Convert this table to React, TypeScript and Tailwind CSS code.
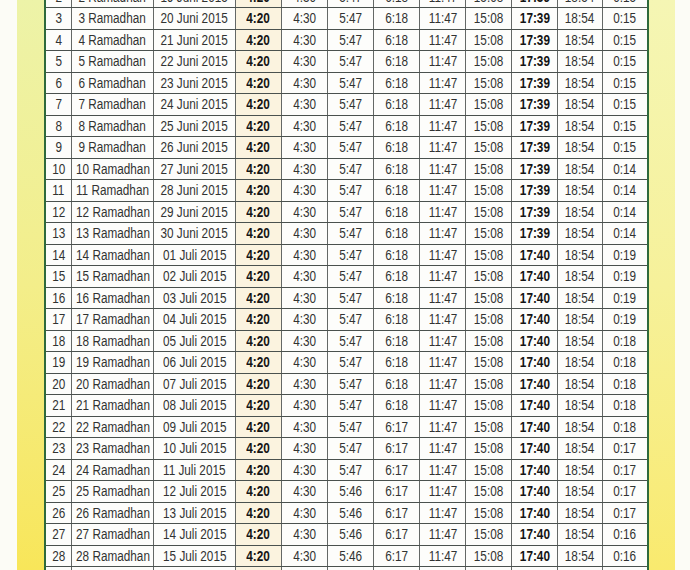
import React from "react";

type Row = {
  no: number;
  date: string;
  imsak: string;
  subuh: string;
  terbit: string;
  dhuha: string;
  dzuhur: string;
  ashar: string;
  maghrib: string;
  isya: string;
  tengah: string;
};

const pad = (n: number) => (n < 10 ? `0${n}` : `${n}`);

function buildRows(): Row[] {
  const rows: Row[] = [];
  for (let no = 2; no <= 29; no++) {
    const day = no + 17;
    const date = day <= 30 ? `${day} Juni 2015` : `${pad(day - 30)} Juli 2015`;
    let tengah = "0:15";
    if (no >= 10) tengah = "0:14";
    if (no >= 14) tengah = "0:19";
    if (no >= 18) tengah = "0:18";
    if (no >= 23) tengah = "0:17";
    if (no >= 27) tengah = "0:16";
    rows.push({
      no,
      date,
      imsak: "4:20",
      subuh: "4:30",
      terbit: no >= 25 ? "5:46" : "5:47",
      dhuha: no >= 22 ? "6:17" : "6:18",
      dzuhur: "11:47",
      ashar: "15:08",
      maghrib: no >= 14 ? "17:40" : "17:39",
      isya: "18:54",
      tengah,
    });
  }
  return rows;
}

const ROWS = buildRows();

const cols =
  "grid grid-cols-[26px_82px_82px_46px_46px_46px_46px_46px_46px_46px_45px_44px]";

function Cell({
  children,
  bold,
  tint,
  last,
}: {
  children: React.ReactNode;
  bold?: boolean;
  tint?: boolean;
  last?: boolean;
}) {
  return (
    <div
      className={`flex items-center justify-center overflow-hidden ${
        last ? "" : "border-r border-[#646866]"
      } ${tint ? "bg-[#fbf3df]" : "bg-[#fdfdfb]"}`}
    >
      <span
        className={`inline-block scale-x-[0.84] whitespace-nowrap ${
          bold ? "font-bold text-[#141414]" : "text-[#313332]"
        }`}
      >
        {children}
      </span>
    </div>
  );
}

export default function App() {
  return (
    <div
      className="flex h-[570px] w-[690px] overflow-hidden bg-[#fcfcf6] text-[14px] leading-none"
      style={{ fontFamily: '"Liberation Sans", Arial, sans-serif' }}
    >
      <div className="w-[17px] shrink-0" />
      <div className="w-[27px] shrink-0 bg-linear-to-b from-[#edf3a8] via-[#f3ee8a] to-[#f8e659]" />
      <div className="shrink-0 border-x-2 border-[#2f6a3c] bg-white">
        <div className="mt-[-13.5px]">
          {ROWS.map((r) => (
            <div
              key={r.no}
              className={`${cols} h-[21.5px] border-b border-[#4a514e]`}
            >
              <Cell>{r.no}</Cell>
              <Cell>{r.no} Ramadhan</Cell>
              <Cell>{r.date}</Cell>
              <Cell bold tint>
                {r.imsak}
              </Cell>
              <Cell>{r.subuh}</Cell>
              <Cell>{r.terbit}</Cell>
              <Cell>{r.dhuha}</Cell>
              <Cell>{r.dzuhur}</Cell>
              <Cell>{r.ashar}</Cell>
              <Cell bold>{r.maghrib}</Cell>
              <Cell>{r.isya}</Cell>
              <Cell last>{r.tengah}</Cell>
            </div>
          ))}
        </div>
      </div>
      <div className="w-[26px] shrink-0 bg-linear-to-b from-[#f5f6b4] via-[#f6f19a] to-[#f9ea6e]" />
      <div className="flex-1" />
    </div>
  );
}
